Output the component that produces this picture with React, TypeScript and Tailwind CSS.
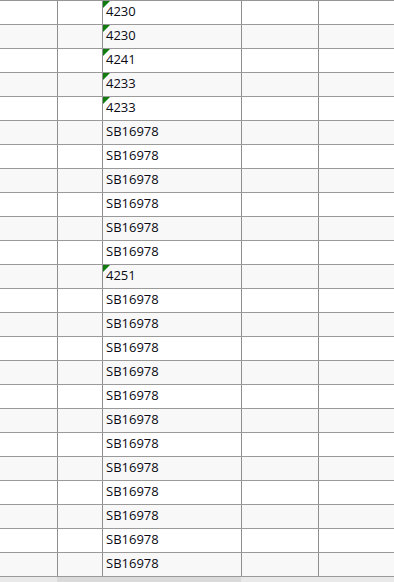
const ROWS: { v: string; flag?: boolean }[] = [
  { v: "4230", flag: true },
  { v: "4230", flag: true },
  { v: "4241", flag: true },
  { v: "4233", flag: true },
  { v: "4233", flag: true },
  ...Array.from({ length: 6 }, () => ({ v: "SB16978" })),
  { v: "4251", flag: true },
  ...Array.from({ length: 12 }, () => ({ v: "SB16978" })),
];

// green "number stored as text" marker in the cell corner
function Flag() {
  return (
    <svg className="absolute left-0 top-0" width="7" height="7" viewBox="0 0 7 7">
      <polygon points="0,0 7,0 0,7" fill="#107c10" />
    </svg>
  );
}

export default function App() {
  return (
    <div
      className="w-[394px] h-[582px] overflow-hidden bg-white"
      style={{ fontFamily: '"Open Sans", "Noto Sans", sans-serif' }}
    >
      <div className="border-t border-[#959595]">
        {ROWS.map((r, i) => (
          <div
            key={i}
            className={`flex h-6 border-b border-[#9a9a9a] ${i % 2 ? "bg-[#f8f8f8]" : "bg-white"}`}
          >
            <div className="w-[58px] shrink-0 border-r border-[#8e8e8e]" />
            <div className="w-[45px] shrink-0 border-r border-[#8e8e8e]" />
            <div className="relative w-[139px] shrink-0 border-r border-[#8e8e8e] pl-[3px] pt-[2px] text-[13px] leading-[16px] text-[#0a0a14]">
              {r.flag && <Flag />}
              {r.v}
            </div>
            <div className="w-[77px] shrink-0 border-r border-[#8e8e8e]" />
            <div className="flex-1" />
          </div>
        ))}
      </div>
      <div className="flex h-[5px] bg-[#e9e9e9]">
        <div className="w-[57px] shrink-0" />
        <div className="w-[184px] shrink-0 bg-[#dadada]" />
      </div>
    </div>
  );
}
